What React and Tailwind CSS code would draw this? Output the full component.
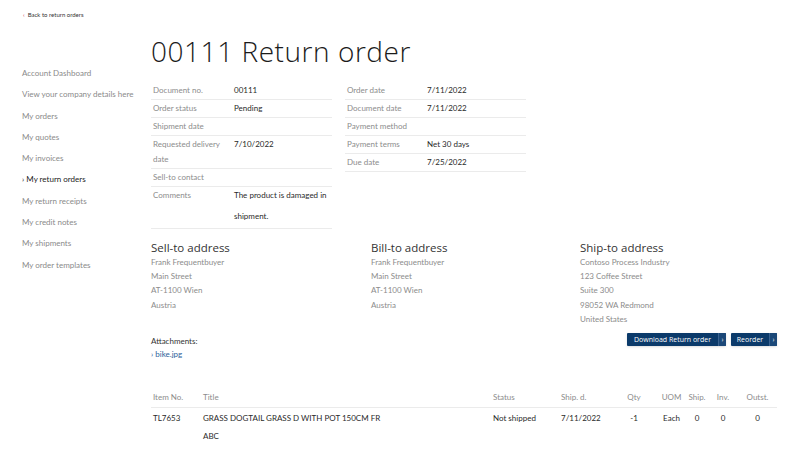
import React from "react";

const heading = { fontFamily: '"Open Sans", "DejaVu Sans", sans-serif' };

const sideLinks = [
  "Account Dashboard",
  "View your company details here",
  "My orders",
  "My quotes",
  "My invoices",
  "My return orders",
  "My return receipts",
  "My credit notes",
  "My shipments",
  "My order templates",
];

const leftInfo = [
  ["Document no.", "00111"],
  ["Order status", "Pending"],
  ["Shipment date", ""],
  ["Requested delivery date", "7/10/2022"],
  ["Sell-to contact", ""],
  ["Comments", "The product is damaged in shipment."],
];

const rightInfo = [
  ["Order date", "7/11/2022"],
  ["Document date", "7/11/2022"],
  ["Payment method", ""],
  ["Payment terms", "Net 30 days"],
  ["Due date", "7/25/2022"],
];

const addresses = [
  { title: "Sell-to address", width: "w-[220px]", lines: ["Frank Frequentbuyer", "Main Street", "AT-1100 Wien", "Austria"] },
  { title: "Bill-to address", width: "w-[209px]", lines: ["Frank Frequentbuyer", "Main Street", "AT-1100 Wien", "Austria"] },
  {
    title: "Ship-to address",
    width: "flex-1",
    lines: ["Contoso Process Industry", "123 Coffee Street", "Suite 300", "98052 WA Redmond", "United States"],
  },
];

function InfoTable({ rows, labelWidth }) {
  return (
    <div className="flex-1">
      {rows.map(([label, value]) => (
        <div key={label} className="flex border-b border-[#ebebeb] py-[1px]">
          <div className={`${labelWidth} shrink-0 pl-[2px] pr-2 leading-[15px] text-[#8c8c8c]`}>{label}</div>
          <div className={`flex-1 text-[#2a2a2a] ${label === "Comments" ? "-mt-[3px] leading-[21px]" : "leading-[15px]"}`}>
            {value}
          </div>
        </div>
      ))}
    </div>
  );
}

function ActionButton({ label, width }) {
  return (
    <button className={`${width} flex h-[13px] items-center overflow-hidden rounded-[1px] bg-[#0b3a6a] text-white shadow-sm`}>
      <span className="flex-1 text-center text-[7px] leading-none" style={heading}>
        {label}
      </span>
      <span className="flex h-full w-[8px] items-center justify-center border-l border-[#3a6290] bg-[#1b4878] text-[7px] leading-none">
        ›
      </span>
    </button>
  );
}

export default function App() {
  return (
    <div
      className="min-h-[453px] w-[800px] bg-white text-[8px] text-[#333]"
      style={{ fontFamily: 'Lato, "Liberation Sans", sans-serif' }}
    >
      <div className="flex items-center gap-[3px] pl-[23px] pt-[10px] text-[6px] leading-[10px]">
        <span className="text-[#c8324a]">‹</span>
        <span className="text-[#333]">Back to return orders</span>
      </div>

      <div className="flex">
        <nav className="w-[151px] shrink-0 pl-[22px] pt-[43px]">
          {sideLinks.map((link) =>
            link === "My return orders" ? (
              <div key={link} className="leading-[21.3px] text-[#222]">
                › {link}
              </div>
            ) : (
              <div key={link} className="leading-[21.3px] text-[#8a8a8a]">
                {link}
              </div>
            )
          )}
        </nav>

        <main className="w-[626px]">
          <h1
            className="pt-[13px] text-[28px] font-light leading-[36px] tracking-[0.55px] text-[#1b1b1b]"
            style={heading}
          >
            00111 Return order
          </h1>

          <div className="mt-[13px] flex w-[375px] gap-[13px]">
            <InfoTable rows={leftInfo} labelWidth="w-[83px]" />
            <InfoTable rows={rightInfo} labelWidth="w-[82px]" />
          </div>

          <div className="mt-[12px] flex">
            {addresses.map((a) => (
              <div key={a.title} className={a.width}>
                <div className="text-[11.5px] leading-[14px] text-[#333]" style={heading}>
                  {a.title}
                </div>
                {a.lines.map((line) => (
                  <div key={line} className="leading-[14.2px] text-[#8c8c8c]">
                    {line}
                  </div>
                ))}
              </div>
            ))}
          </div>

          <div className="-mt-[1px] flex items-start justify-between">
            <div className="pt-[9px]">
              <div className="leading-[14px] text-[#333]">Attachments:</div>
              <div className="leading-[12px] text-[#2d5f9a]">› bike.jpg</div>
            </div>
            <div className="mt-[8px] flex gap-[5px]">
              <ActionButton label="Download Return order" width="w-[99px]" />
              <ActionButton label="Reorder" width="w-[46px]" />
            </div>
          </div>

          <div className="mt-[30px]">
            <div className="flex border-b border-[#ebebeb] pb-[3px] leading-[14px] text-[#8c8c8c]">
              <div className="w-[52px] pl-[2px]">Item No.</div>
              <div className="w-[290px]">Title</div>
              <div className="w-[68px]">Status</div>
              <div className="w-[60px]">Ship. d.</div>
              <div className="w-[26px] text-center">Qty</div>
              <div className="ml-[8px] w-[33px] text-center">UOM</div>
              <div className="w-[18px] text-center">Ship.</div>
              <div className="ml-[6px] w-[22px] text-center">Inv.</div>
              <div className="ml-[6px] w-[35px] text-center">Outst.</div>
            </div>
            <div className="flex pt-[3px] leading-[14px] text-[#2a2a2a]">
              <div className="w-[52px] pl-[2px]">TL7653</div>
              <div className="w-[290px]">
                <div>GRASS DOGTAIL GRASS D WITH POT 150CM FR</div>
                <div className="mt-[4px]">ABC</div>
              </div>
              <div className="w-[68px]">Not shipped</div>
              <div className="w-[60px]">7/11/2022</div>
              <div className="w-[26px] text-center">-1</div>
              <div className="ml-[8px] w-[33px] text-center">Each</div>
              <div className="w-[18px] text-center">0</div>
              <div className="ml-[6px] w-[22px] text-center">0</div>
              <div className="ml-[6px] w-[35px] text-center">0</div>
            </div>
          </div>
        </main>
      </div>
    </div>
  );
}
